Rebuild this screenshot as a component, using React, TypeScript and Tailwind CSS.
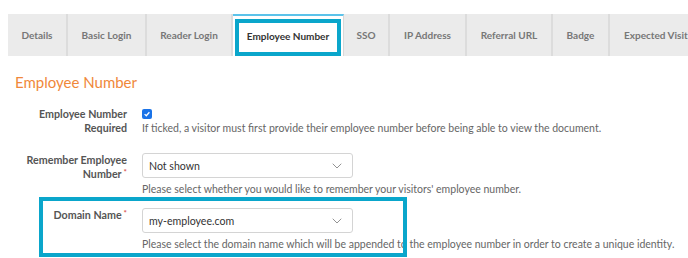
import { ChevronDown } from 'lucide-react';

const tabs = [
  { label: 'Details', w: 'w-[60px]' },
  { label: 'Basic Login', w: 'w-[79px]' },
  { label: 'Reader Login', w: 'w-[86px]' },
  { label: 'Employee Number', w: 'w-[111px]', active: true },
  { label: 'SSO', w: 'w-[46px]' },
  { label: 'IP Address', w: 'w-[77px]' },
  { label: 'Referral URL', w: 'w-[86px]' },
  { label: 'Badge', w: 'w-[57px]' },
  { label: 'Expected Visit', w: 'pl-[14px] pr-[14px]' },
];

const Select = ({ value }: { value: string }) => (
  <div className="flex h-[25px] w-[211px] items-center justify-between rounded-[3px] border border-[#d4d4d4] bg-white pl-[6px] pr-[7px]">
    <span className="text-[10.6px] text-[#333]">{value}</span>
    <ChevronDown className="h-[16px] w-[16px] text-[#777]" strokeWidth={1.2} />
  </div>
);

const Req = () => <span className="relative -top-[3px] ml-[2px] text-[8px] text-[#d9534f]">*</span>;

const App = () => {
  return (
    <div className="relative h-[258px] w-[688px] overflow-hidden bg-white font-['Lato',sans-serif]">
      <div className="ml-[8px] mt-[14px] flex h-[42px] bg-[#ebebeb]">
        {tabs.map((t) => (
          <div
            key={t.label}
            className={
              t.active
                ? `relative flex shrink-0 items-center justify-center border-t-2 border-r border-t-[#5cc3ea] border-r-[#d8d8d8] bg-white text-[10px] font-bold text-[#333] ${t.w}`
                : `flex shrink-0 items-center justify-center whitespace-nowrap border-r-2 border-r-[#dcdcdc] text-[10px] font-bold text-[#777] ${t.w}`
            }
          >
            {t.label}
            {t.active && (
              <div className="absolute left-[2px] top-[3px] h-[37px] w-[106px] border-4 border-[#0aa6cb]" />
            )}
          </div>
        ))}
      </div>

      <h2 className="ml-[15px] mt-[14px] text-[15px] leading-[24px] text-[#f0883a]">Employee Number</h2>

      <div className="mt-[13px] grid grid-cols-[113px_1fr] gap-x-[15px] pl-[14px] text-[10.5px] leading-[14px]">
        <div className="text-right text-[10.7px] font-bold text-[#555]">Employee Number Required</div>
        <div>
          <div className="flex h-[14px] items-center">
            <span className="flex h-[10px] w-[10px] items-center justify-center rounded-[2px] bg-[#1a73e8]">
              <svg viewBox="0 0 10 10" className="h-[8px] w-[8px]">
                <path d="M2 5.2 L4.1 7.2 L8 2.8" fill="none" stroke="white" strokeWidth="1.6" />
              </svg>
            </span>
          </div>
          <p className="text-[#666]">
            If ticked, a visitor must first provide their employee number before being able to view the document.
          </p>
        </div>

        <div className="mt-[18px] text-right text-[10.7px] font-bold text-[#555]">
          Remember Employee Number
          <Req />
        </div>
        <div className="mt-[18px]">
          <Select value="Not shown" />
          <p className="mt-[4px] text-[#666]">
            Please select whether you would like to remember your visitors' employee number.
          </p>
        </div>

        <div className="mt-[12px] text-right text-[10.7px] font-bold text-[#555]">
          Domain Name
          <Req />
        </div>
        <div className="mt-[12px]">
          <Select value="my-employee.com" />
          <p className="mt-[4px] text-[#666]">
            Please select the domain name which will be appended to the employee number in order to create a unique identity.
          </p>
        </div>
      </div>

      <div className="absolute left-[39px] top-[197px] h-[60px] w-[368px] border-4 border-[#0aa6cb]" />
    </div>
  );
};

export default App;
